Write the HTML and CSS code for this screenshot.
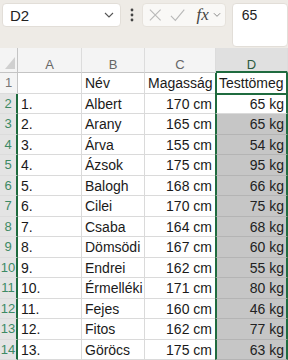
FILE: index.html
```html
<!DOCTYPE html>
<html lang="hu">
<head>
    <meta charset="UTF-8">
    <meta name="viewport" content="width=device-width, initial-scale=1.0">
    <title>Munkafüzet</title>
    <link rel="stylesheet" href="styles.css">
</head>
<body>
    <div class="toolbar">
        <div class="namebox">
            <span>D2</span>
            <svg class="chev" width="10" height="6" viewBox="0 0 10 6"><path d="M1 1l4 4 4-4" fill="none" stroke="#555" stroke-width="1.1"/></svg>
        </div>
        <div class="dots">
            <svg width="4" height="14" viewBox="0 0 4 14"><circle cx="2" cy="2" r="1.4" fill="#444"/><circle cx="2" cy="7" r="1.4" fill="#444"/><circle cx="2" cy="12" r="1.4" fill="#444"/></svg>
        </div>
        <div class="fbtns">
            <svg width="14" height="14" viewBox="0 0 14 14"><path d="M1 1l12 12M13 1L1 13" stroke="#b8b8b8" stroke-width="1.2"/></svg>
            <svg width="17" height="14" viewBox="0 0 17 14"><path d="M1 8l5 5L16 1" fill="none" stroke="#b8b8b8" stroke-width="1.2"/></svg>
            <span class="fx">fx</span>
            <svg class="chev" width="9" height="6" viewBox="0 0 9 6"><path d="M1 1l3.5 3.5L8 1" fill="none" stroke="#888" stroke-width="1.1"/></svg>
        </div>
        <div class="fbox">65</div>
    </div>

    <div class="sheet">
        <div class="hd corner"><span class="tri"></span></div>
        <div class="hd">A</div>
        <div class="hd">B</div>
        <div class="hd">C</div>
        <div class="hd sel">D</div>

        <div class="rh">1</div>
        <div class="c"></div>
        <div class="c">Név</div>
        <div class="c">Magasság</div>
        <div class="c d">Testtömeg</div>

        <div class="rh on">2</div><div class="c">1.</div><div class="c">Albert</div><div class="c r">170 cm</div><div class="c d r active">65 kg</div>
        <div class="rh on">3</div><div class="c">2.</div><div class="c">Arany</div><div class="c r">165 cm</div><div class="c d r g">65 kg</div>
        <div class="rh on">4</div><div class="c">3.</div><div class="c">Árva</div><div class="c r">155 cm</div><div class="c d r g">54 kg</div>
        <div class="rh on">5</div><div class="c">4.</div><div class="c">Ázsok</div><div class="c r">175 cm</div><div class="c d r g">95 kg</div>
        <div class="rh on">6</div><div class="c">5.</div><div class="c">Balogh</div><div class="c r">168 cm</div><div class="c d r g">66 kg</div>
        <div class="rh on">7</div><div class="c">6.</div><div class="c">Cilei</div><div class="c r">170 cm</div><div class="c d r g">75 kg</div>
        <div class="rh on">8</div><div class="c">7.</div><div class="c">Csaba</div><div class="c r">164 cm</div><div class="c d r g">68 kg</div>
        <div class="rh on">9</div><div class="c">8.</div><div class="c">Dömsödi</div><div class="c r">167 cm</div><div class="c d r g">60 kg</div>
        <div class="rh on">10</div><div class="c">9.</div><div class="c">Endrei</div><div class="c r">162 cm</div><div class="c d r g">55 kg</div>
        <div class="rh on">11</div><div class="c">10.</div><div class="c">Érmelléki</div><div class="c r">171 cm</div><div class="c d r g">80 kg</div>
        <div class="rh on">12</div><div class="c">11.</div><div class="c">Fejes</div><div class="c r">160 cm</div><div class="c d r g">46 kg</div>
        <div class="rh on">13</div><div class="c">12.</div><div class="c">Fitos</div><div class="c r">162 cm</div><div class="c d r g">77 kg</div>
        <div class="rh on">14</div><div class="c">13.</div><div class="c">Göröcs</div><div class="c r">175 cm</div><div class="c d r g">63 kg</div>
        <div class="rh on"></div><div class="c"></div><div class="c"></div><div class="c"></div><div class="c d g"></div>
    </div>
</body>
</html>
```

FILE: styles.css
```css
body {
    margin: 0;
    font-family: "Liberation Sans", Arial, sans-serif;
    background: #fff;
    overflow: hidden;
}
.toolbar {
    display: flex;
    align-items: flex-start;
    height: 48px;
    padding: 3px 0 0 2px;
    box-sizing: border-box;
    background-color: #eeebe6;
}
.namebox {
    display: flex;
    align-items: center;
    justify-content: space-between;
    width: 128px;
    height: 24px;
    box-sizing: border-box;
    padding: 0 6px 0 7px;
    background: #fff;
    border: 1px solid #e2ded8;
    border-radius: 4px;
    font-size: 15px;
    color: #222;
}
.dots {
    width: 22px;
    display: flex;
    justify-content: center;
    padding-top: 5px;
}
.fbtns {
    display: flex;
    align-items: center;
    gap: 9px;
    width: 84px;
    height: 24px;
    box-sizing: border-box;
    padding: 0 4px 0 6px;
    background: #f9f8f6;
    border: 1px solid #e6e2dc;
    border-radius: 4px;
}
.fx {
    font-family: "Liberation Serif", "Times New Roman", serif;
    font-style: italic;
    font-size: 17px;
    color: #444;
    margin-left: 2px;
    margin-right: -5px;
}
.fbox {
    margin-left: 6px;
    width: 60px;
    height: 44px;
    box-sizing: border-box;
    padding: 3px 0 0 9px;
    background: #fff;
    border: 1px solid #e2ded8;
    border-radius: 4px;
    font-size: 14px;
    color: #222;
}
.sheet {
    display: grid;
    grid-template-columns: 18px 64px 63px 71px 72px;
    grid-template-rows: 25px repeat(15, 20.5px);
    font-size: 14px;
    color: #1a1a1a;
}
.hd {
    position: relative;
    box-sizing: border-box;
    padding-top: 9px;
    background: #f4f4f4;
    border-right: 1px solid #dcdcdc;
    border-bottom: 1px solid #c4c4c4;
    color: #666;
    font-size: 13px;
    text-align: center;
    line-height: 15px;
}
.hd.sel {
    background: #e0e0e0;
    color: #2c5a3e;
    border-bottom: 2px solid #1f6b3f;
}
.corner {
    border-right: 1px solid #c4c4c4;
}
.tri {
    position: absolute;
    right: 2px;
    bottom: 3px;
    width: 0;
    height: 0;
    border-left: 10px solid transparent;
    border-bottom: 12px solid #d0d0d0;
}
.rh {
    background: #f4f4f4;
    border-right: 1px solid #c4c4c4;
    border-bottom: 1px solid #dcdcdc;
    color: #777;
    font-size: 13px;
    text-align: center;
    line-height: 20px;
}
.rh.on {
    background: #e4e4e4;
    color: #3d8a64;
    border-right: 2px solid #1f6b3f;
}
.c {
    box-sizing: border-box;
    border-right: 1px solid #dadada;
    border-bottom: 1px solid #dadada;
    padding: 0 3px;
    line-height: 20px;
    white-space: nowrap;
    overflow: hidden;
}
.c.r {
    text-align: right;
}
.c.d {
    border-left: 2px solid #1f6b3f;
    border-right: 2px solid #1f6b3f;
    margin-left: -1px;
    padding: 0 2px 0 2px;
    overflow: visible;
}
.c.g {
    background: #c6c6c6;
    border-bottom-color: #b4b4b4;
    color: #222;
}
.c.active {
    border-top: 2px solid #1f6b3f;
    margin-top: -1px;
    line-height: 18px;
}
```
